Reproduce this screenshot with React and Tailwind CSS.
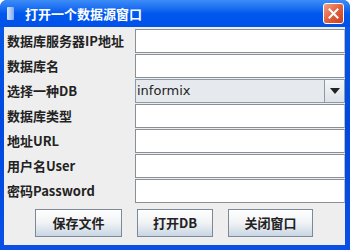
const fields = [
  { label: '数据库服务器IP地址' },
  { label: '数据库名' },
  { label: '选择一种DB', combo: 'informix' },
  { label: '数据库类型', faint: true },
  { label: '地址URL' },
  { label: '用户名User' },
  { label: '密码Password' },
];

const buttons = [
  { text: '保存文件', w: 'w-[87px]', ml: 'ml-[31px]' },
  { text: '打开DB', w: 'w-[76px]', ml: 'ml-[15px]' },
  { text: '关闭窗口', w: 'w-[85px]', ml: 'ml-[15px]' },
];

const cjk = { fontFamily: '"Noto Sans CJK SC", "Liberation Sans", sans-serif' };

const App = () => {
  return (
    <div className="h-[250px] w-[350px] overflow-hidden rounded-t-[7px] bg-gradient-to-b from-[#0a5ce8] via-[#0048e0] to-[#0a50e6]">
      <div className="flex h-[27px] items-center bg-gradient-to-b from-[#3d8cf7] via-[#0058ee] to-[#0050e8] pl-[7px] pr-[6px]">
        <div className="h-[13px] w-[7px] rounded-[1px] bg-gradient-to-r from-[#d8e6ff] to-[#7fa8f0]" />
        <span className="ml-[11px] text-[13px] font-bold leading-none text-white" style={cjk}>
          打开一个数据源窗口
        </span>
        <div className="ml-auto flex h-[21px] w-[21px] items-center justify-center rounded-[3px] border border-white bg-gradient-to-br from-[#f0a088] via-[#e0603c] to-[#c84020]">
          <svg width="11" height="11" viewBox="0 0 11 11">
            <path d="M1.5 1.5 L9.5 9.5 M9.5 1.5 L1.5 9.5" stroke="white" strokeWidth="2" strokeLinecap="square" />
          </svg>
        </div>
      </div>
      <div className="mx-[4px] mb-[5px] mr-[5px] h-[218px] bg-[#eeeeee] pt-[2px]">
        <div className="flex flex-col gap-[1px]">
          {fields.map((f) => (
            <div key={f.label} className="flex h-[24px] items-center">
              <div className="w-[131px] pl-[3px] text-[13px] font-bold text-[#222222]" style={cjk}>
                {f.label}
              </div>
              {f.combo ? (
                <div className="flex h-[24px] flex-1 border border-[#8a9aa8] bg-[#e6eaee]">
                  <div
                    className="flex flex-1 items-center pl-[1px] text-[13px] text-[#222222]"
                    style={{ fontFamily: '"DejaVu Sans", sans-serif' }}
                  >
                    {f.combo}
                  </div>
                  <div className="flex w-[20px] items-center justify-center border-l border-[#8a9aa8] bg-gradient-to-b from-[#f4f6f8] to-[#dde3ea]">
                    <svg width="10" height="6" viewBox="0 0 10 6">
                      <path d="M0 0 L10 0 L5 6 Z" fill="#222222" />
                    </svg>
                  </div>
                </div>
              ) : (
                <div className="h-[24px] flex-1 border border-[#8a8f96] border-r-[#b8bcc0] bg-white" />
              )}
            </div>
          ))}
        </div>
        <div className="mt-[6px] flex">
          {buttons.map((b) => (
            <div
              key={b.text}
              className={`${b.w} ${b.ml} flex h-[28px] items-center justify-center border border-[#7a8a99] bg-gradient-to-b from-[#ffffff] via-[#f0f2f4] to-[#c8d6e4] text-[13px] font-bold text-[#222222]`}
              style={cjk}
            >
              {b.text}
            </div>
          ))}
        </div>
      </div>
    </div>
  );
};

export default App;
